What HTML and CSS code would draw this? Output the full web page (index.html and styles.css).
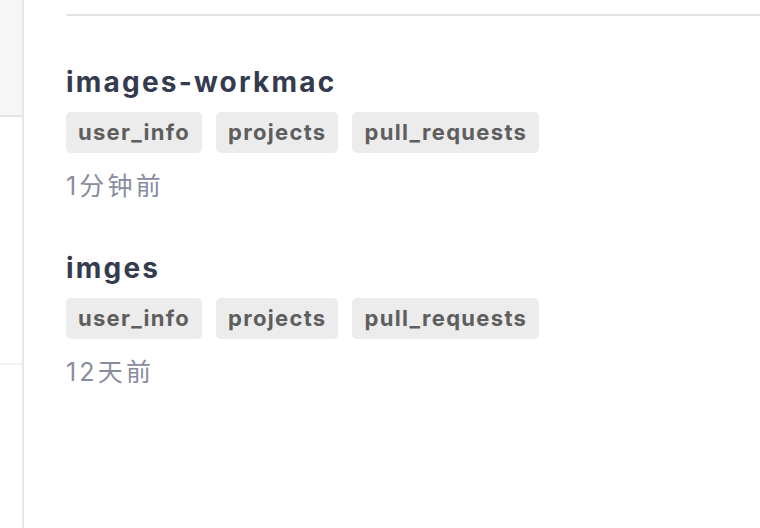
FILE: index.html
```html
<!DOCTYPE html>
<html lang="zh-CN">
<head>
<meta charset="utf-8">
<title>Repos</title>
<link rel="stylesheet" href="styles.css">
</head>
<body>
<div class="page">
  <aside class="sidebar">
    <div class="side-top"></div>
    <div class="side-mid"></div>
  </aside>
  <main class="main">
    <div class="topline"></div>
    <section class="item">
      <h2 class="title">images-workmac</h2>
      <div class="tags">
        <span class="tag">user_info</span>
        <span class="tag">projects</span>
        <span class="tag">pull_requests</span>
      </div>
      <div class="time">1分钟前</div>
    </section>
    <section class="item">
      <h2 class="title">imges</h2>
      <div class="tags">
        <span class="tag">user_info</span>
        <span class="tag">projects</span>
        <span class="tag">pull_requests</span>
      </div>
      <div class="time">12天前</div>
    </section>
  </main>
</div>
</body>
</html>
```
FILE: styles.css
```css
html, body {
  margin: 0;
  padding: 0;
  background: #ffffff;
}
body {
  font-family: Inter, "Noto Sans CJK SC", sans-serif;
}
.page {
  display: flex;
  height: 528px;
  overflow: hidden;
}
.sidebar {
  width: 22px;
  flex: none;
  border-right: 2px solid #e4e6ea;
  display: flex;
  flex-direction: column;
}
.side-top {
  height: 115px;
  background: #f6f6f7;
  border-bottom: 2px solid #e2e5e9;
}
.side-mid {
  height: 246px;
  border-bottom: 2px solid #f1f1f2;
}
.main {
  flex: 1;
  padding-left: 42px;
}
.topline {
  height: 14px;
  border-bottom: 2px solid #e3e3e3;
}
.item {
  margin-top: 49px;
}
.title {
  margin: 0;
  font-size: 28px;
  line-height: 34px;
  font-weight: 700;
  letter-spacing: 2.2px;
  color: #343b4e;
}
.tags {
  display: flex;
  gap: 14px;
  margin-top: 13px;
}
.tag {
  background: #ececec;
  color: #5e5e5e;
  font-weight: 700;
  font-size: 22px;
  line-height: 41px;
  letter-spacing: 1.3px;
  padding: 0 12px;
  border-radius: 5px;
}
.time {
  margin-top: 17px;
  font-size: 25px;
  line-height: 32px;
  letter-spacing: 3.2px;
  color: #878c9e;
}
```
